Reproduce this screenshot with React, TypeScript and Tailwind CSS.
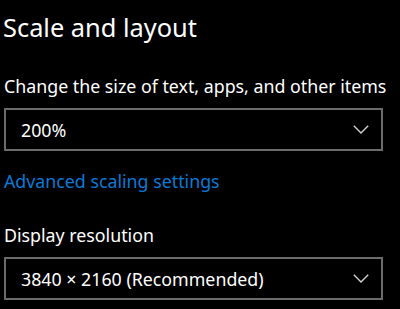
import React from "react";

function Chevron() {
  return (
    <svg width="16" height="9" viewBox="0 0 16 9" fill="none">
      <path d="M0.8 0.8 L8 8 L15.2 0.8" stroke="#d0d0d0" strokeWidth="1.4" />
    </svg>
  );
}

function Select({ value }: { value: string }) {
  return (
    <div className="ml-[4px] flex h-[43px] w-[379px] items-center justify-between border-2 border-[#6b6b6b] pl-[15px] pr-[12px]">
      <span className="text-[17.8px] leading-[24px] text-white">{value}</span>
      <Chevron />
    </div>
  );
}

export default function App() {
  return (
    <div
      className="h-[309px] w-[400px] overflow-hidden bg-black text-white"
      style={{ fontFamily: '"Noto Sans", sans-serif' }}
    >
      <div className="pt-[9px] pl-[3px] text-[25.4px] leading-[36px]">Scale and layout</div>
      <div className="mt-[29px] pl-[4px] text-[17.8px] leading-[24px]">
        Change the size of text, apps, and other items
      </div>
      <div className="mt-[10px]">
        <Select value="200%" />
      </div>
      <div className="mt-[18px] pl-[4px] text-[17.8px] leading-[24px] text-[#0a7ad8]">
        Advanced scaling settings
      </div>
      <div className="mt-[30px] pl-[4px] text-[17.8px] leading-[24px]">Display resolution</div>
      <div className="mt-[10px]">
        <Select value="3840 × 2160 (Recommended)" />
      </div>
    </div>
  );
}
